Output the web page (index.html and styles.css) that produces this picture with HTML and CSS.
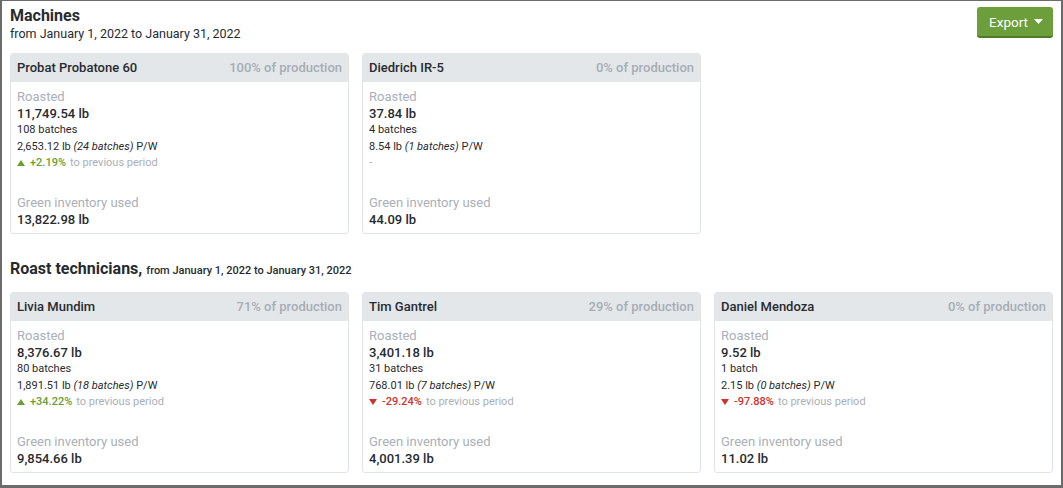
FILE: index.html
```html
<!DOCTYPE html>
<html lang="en">
<head>
  <meta charset="UTF-8">
  <meta name="viewport" content="width=device-width, initial-scale=1.0">
  <title>Production report</title>
  <link rel="stylesheet" href="styles.css">
</head>
<body>
  <div class="page">
    <!-- Machines -->
    <div class="section-head">
      <div>
        <h2>Machines</h2>
        <p class="range">from January 1, 2022 to January 31, 2022</p>
      </div>
      <button class="export">Export <svg class="caret" width="9" height="5" viewBox="0 0 9 5"><path d="M0 0h9L4.5 5z" fill="#fff"/></svg></button>
    </div>

    <div class="cards">
      <div class="card">
        <div class="card-head"><span class="name">Probat Probatone 60</span><span class="share">100% of production</span></div>
        <div class="card-body">
          <div class="label">Roasted</div>
          <div class="value">11,749.54 lb</div>
          <div class="small">108 batches</div>
          <div class="small">2,653.12 lb <i>(24 batches)</i> P/W</div>
          <div class="change up"><svg width="8" height="6" viewBox="0 0 8 6"><path d="M4 0l4 6H0z"/></svg><b>+2.19%</b> to previous period</div>
          <div class="label spaced">Green inventory used</div>
          <div class="value">13,822.98 lb</div>
        </div>
      </div>

      <div class="card">
        <div class="card-head"><span class="name">Diedrich IR-5</span><span class="share">0% of production</span></div>
        <div class="card-body">
          <div class="label">Roasted</div>
          <div class="value">37.84 lb</div>
          <div class="small">4 batches</div>
          <div class="small">8.54 lb <i>(1 batches)</i> P/W</div>
          <div class="change">-</div>
          <div class="label spaced">Green inventory used</div>
          <div class="value">44.09 lb</div>
        </div>
      </div>
    </div>

    <!-- Roast technicians -->
    <h2 class="section-title">Roast technicians, <small>from January 1, 2022 to January 31, 2022</small></h2>

    <div class="cards">
      <div class="card">
        <div class="card-head"><span class="name">Livia Mundim</span><span class="share">71% of production</span></div>
        <div class="card-body">
          <div class="label">Roasted</div>
          <div class="value">8,376.67 lb</div>
          <div class="small">80 batches</div>
          <div class="small">1,891.51 lb <i>(18 batches)</i> P/W</div>
          <div class="change up"><svg width="8" height="6" viewBox="0 0 8 6"><path d="M4 0l4 6H0z"/></svg><b>+34.22%</b> to previous period</div>
          <div class="label spaced">Green inventory used</div>
          <div class="value">9,854.66 lb</div>
        </div>
      </div>

      <div class="card">
        <div class="card-head"><span class="name">Tim Gantrel</span><span class="share">29% of production</span></div>
        <div class="card-body">
          <div class="label">Roasted</div>
          <div class="value">3,401.18 lb</div>
          <div class="small">31 batches</div>
          <div class="small">768.01 lb <i>(7 batches)</i> P/W</div>
          <div class="change down"><svg width="8" height="6" viewBox="0 0 8 6"><path d="M0 0h8L4 6z"/></svg><b>-29.24%</b> to previous period</div>
          <div class="label spaced">Green inventory used</div>
          <div class="value">4,001.39 lb</div>
        </div>
      </div>

      <div class="card">
        <div class="card-head"><span class="name">Daniel Mendoza</span><span class="share">0% of production</span></div>
        <div class="card-body">
          <div class="label">Roasted</div>
          <div class="value">9.52 lb</div>
          <div class="small">1 batch</div>
          <div class="small">2.15 lb <i>(0 batches)</i> P/W</div>
          <div class="change down"><svg width="8" height="6" viewBox="0 0 8 6"><path d="M0 0h8L4 6z"/></svg><b>-97.88%</b> to previous period</div>
          <div class="label spaced">Green inventory used</div>
          <div class="value">11.02 lb</div>
        </div>
      </div>
    </div>
  </div>
</body>
</html>
```

FILE: styles.css
```css
body {
  margin: 0;
  font-family: Roboto, "Liberation Sans", Arial, sans-serif;
  color: #272b30;
  background-color: #fff;
}
.page {
  box-sizing: border-box;
  width: 1063px;
  height: 488px;
  border-style: solid;
  border-color: #6b6b6b;
  border-width: 1px 2px 3px 2px;
  padding: 5px 8px 0 8px;
}
.section-head {
  display: flex;
  justify-content: space-between;
  align-items: flex-start;
}
.section-head h2 {
  margin: 0;
  font-size: 16px;
  line-height: 20px;
  font-weight: 700;
}
.range {
  margin: 0;
  font-size: 12.5px;
  line-height: 16px;
}
.export {
  margin-top: 1px;
  height: 31px;
  padding: 0 10px 0 12px;
  font-family: inherit;
  font-size: 13.5px;
  color: #fff;
  background-color: #6c9e3b;
  border: none;
  border-bottom: 2px solid #4f7a28;
  border-radius: 3px;
  display: flex;
  align-items: center;
  gap: 6px;
  cursor: pointer;
}
.cards {
  display: grid;
  grid-template-columns: repeat(3, 1fr);
  gap: 13px;
  margin-top: 11px;
}
.card {
  border: 1px solid #e1e4e7;
  border-radius: 3px;
  overflow: hidden;
}
.card-head {
  display: flex;
  justify-content: space-between;
  background-color: #e4e7ea;
  padding: 6px;
  line-height: 16px;
  font-size: 13px;
  font-weight: 500;
}
.card-head .share {
  color: #a6adb4;
}
.card-body {
  padding: 6px 6px 5px 6px;
}
.label {
  font-size: 13px;
  line-height: 17px;
  color: #a9b0b8;
}
.label.spaced {
  margin-top: 23px;
}
.value {
  font-size: 13px;
  line-height: 17px;
  font-weight: 500;
}
.small {
  font-size: 11px;
  line-height: 16.5px;
}
.change {
  font-size: 11px;
  line-height: 16px;
  color: #a9b0b8;
  display: flex;
  align-items: center;
  gap: 4px;
}
.change svg {
  margin-right: 1px;
}
.change b {
  font-weight: 500;
}
.change.up svg { fill: #6aa032; }
.change.up b { color: #6aa032; }
.change.down svg { fill: #d0312d; }
.change.down b { color: #d0312d; }
.section-title {
  margin: 25px 0 0 0;
  font-size: 16px;
  line-height: 20px;
  font-weight: 700;
}
.section-title small {
  font-size: 11px;
  font-weight: 500;
}
.section-title + .cards {
  margin-top: 11px;
}
```
